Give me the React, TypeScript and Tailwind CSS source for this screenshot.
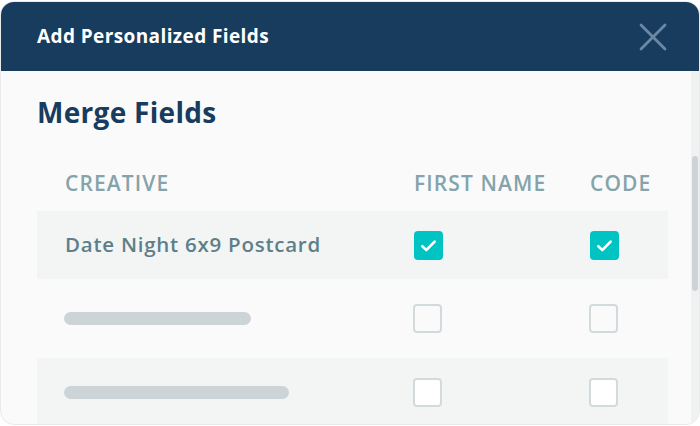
import React from "react";

const font = { fontFamily: '"Open Sans", "Lato", sans-serif' };

function Check({ checked, white }: { checked?: boolean; white?: boolean }) {
  if (checked) {
    return (
      <div className="w-[29px] h-[29px] rounded-[4px] bg-[#00c4c4] flex items-center justify-center">
        <svg width="19" height="19" viewBox="0 0 16 16" fill="none">
          <path d="M2.8 8.6 L6.2 11.8 L13.2 4.8" stroke="white" strokeWidth="2.2" strokeLinecap="round" strokeLinejoin="round" />
        </svg>
      </div>
    );
  }
  return (
    <div className={`w-[29px] h-[29px] rounded-[4px] border-2 border-[#d3dade] ${white ? "bg-white" : "bg-[#fafafa]"}`} />
  );
}

export default function App() {
  return (
    <div className="w-[700px] h-[426px] bg-white pt-px" style={font}>
      <div className="w-[700px] h-[424px] rounded-[14px] overflow-hidden border border-[#e8eaeb] bg-[#fafafa] flex flex-col">
        <div className="h-[69px] shrink-0 bg-[#173c5e] flex items-center justify-between pl-[36px] pr-[32px]">
          <span className="text-white text-[19px] font-bold tracking-[0.4px]">Add Personalized Fields</span>
          <svg width="28" height="28" viewBox="0 0 28 28" fill="none">
            <path d="M2 2 L26 26 M26 2 L2 26" stroke="#6b89a5" strokeWidth="2.8" strokeLinecap="round" />
          </svg>
        </div>
        <div className="flex-1 flex min-h-0">
          <div className="flex-1 pl-[36px] pr-[23px]">
            <div className="pt-[23px] h-[88px] text-[#173c5e] text-[28px] font-bold tracking-[0.3px] leading-[36px]">Merge Fields</div>
            <div className="grid grid-cols-[349px_176px_1fr] pl-[28px] h-[52px] pb-[2px] items-center text-[#84a3ab] text-[21px] font-semibold tracking-[1.1px]">
              <span>CREATIVE</span>
              <span>FIRST NAME</span>
              <span>CODE</span>
            </div>
            <div className="grid grid-cols-[349px_176px_1fr] pl-[28px] h-[68px] items-center bg-[#f3f5f5]">
              <span className="text-[#5e7f89] text-[20.5px] font-semibold tracking-[0.75px] pb-[2px]">Date Night 6x9 Postcard</span>
              <Check checked />
              <Check checked />
            </div>
            <div className="grid grid-cols-[349px_176px_1fr] pl-[27px] h-[79px] items-center">
              <div className="w-[187px] h-[13px] rounded-full bg-[#cdd4d8]" />
              <Check />
              <Check />
            </div>
            <div className="grid grid-cols-[349px_176px_1fr] pl-[27px] h-[68px] items-center bg-[#f3f5f5]">
              <div className="w-[225px] h-[13px] rounded-full bg-[#cdd4d8]" />
              <Check white />
              <Check white />
            </div>
          </div>
          <div className="w-[8px] bg-[#f0f1f1] pt-[85px]">
            <div className="w-[6px] h-[135px] rounded-full bg-[#cdd4d8] ml-px" />
          </div>
        </div>
      </div>
    </div>
  );
}
